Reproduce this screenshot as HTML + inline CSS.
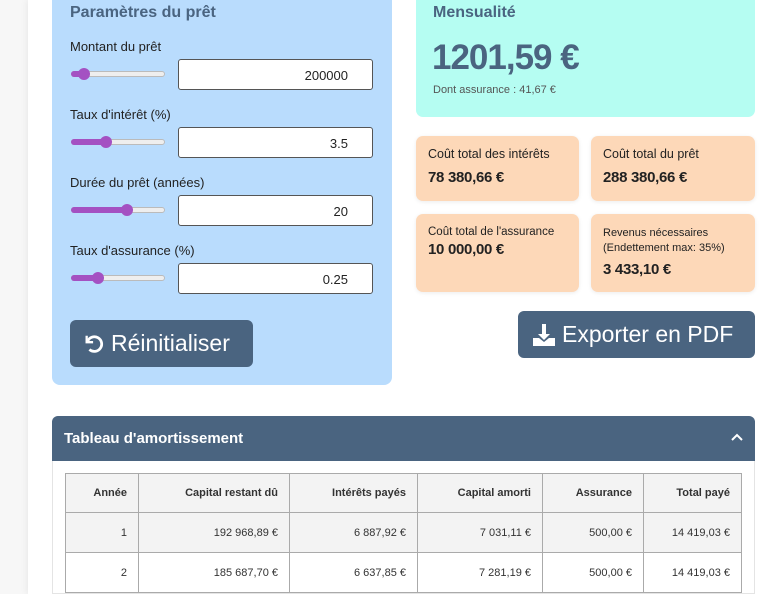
<!DOCTYPE html>
<html><head><meta charset="utf-8"><style>
*{box-sizing:border-box;margin:0;padding:0}
body{width:774px;height:594px;overflow:hidden;background:#f7f7f7;font-family:"Liberation Sans",sans-serif;position:relative}
.main{position:absolute;left:28px;top:0;width:746px;height:594px;background:#fff;box-shadow:-2px 0 6px rgba(0,0,0,.05)}
.a{position:absolute}
.blue{left:52px;top:-10px;width:340px;height:395px;background:#b9dcfd;border-radius:8px}
.lbl{position:absolute;left:70px;font-size:13px;color:#222}
.inp{position:absolute;left:178px;width:195px;height:31px;background:#fff;border:1px solid #555;border-radius:3px;font-size:13px;text-align:right;padding:8px 24px 0 0;color:#222}
.sl{position:absolute;left:71px;width:94px;height:6px;border-radius:3px;background:#eee;border:1px solid #bbb}
.sl i{position:absolute;left:-1px;top:-1px;height:6px;border-radius:3px;background:#a451c2}
.sl b{position:absolute;top:-4px;width:12px;height:12px;border-radius:50%;background:#a451c2;margin-left:-6px}
.btn{background:#4a6480;color:#fff;border-radius:6px;font-size:23px;display:flex;align-items:center}
.card{background:#fdd8b8;border-radius:7px;box-shadow:0 1px 4px rgba(0,0,0,.08);padding:11px 12px;color:#222}
.card .t{font-size:12.5px}.card .v{font-size:15px;font-weight:bold;margin-top:8px;letter-spacing:-.3px}
table{position:absolute;left:65px;top:473px;width:677px;border-collapse:collapse;font-size:11px;color:#333}
td,th{border:1px solid #aaa;text-align:right;padding:0 11px;height:40px}
th{height:39px;font-weight:bold;background:#f3f3f3}
tr:nth-child(2) td{background:#f3f3f3}
</style></head><body>
<div class="main"></div>
<div class="a blue"></div>
<div class="a" style="left:70px;top:4px;font-size:16px;font-weight:bold;color:#4a6480">Paramètres du prêt</div>
<div class="lbl" style="top:39px">Montant du prêt</div>
<div class="sl" style="top:71px"><i style="width:13px"></i><b style="left:12px"></b></div>
<div class="inp" style="top:59px">200000</div>
<div class="lbl" style="top:107px">Taux d'intérêt (%)</div>
<div class="sl" style="top:139px"><i style="width:35px"></i><b style="left:34px"></b></div>
<div class="inp" style="top:127px">3.5</div>
<div class="lbl" style="top:175px">Durée du prêt (années)</div>
<div class="sl" style="top:207px"><i style="width:56px"></i><b style="left:55px"></b></div>
<div class="inp" style="top:195px">20</div>
<div class="lbl" style="top:243px">Taux d'assurance (%)</div>
<div class="sl" style="top:275px"><i style="width:27px"></i><b style="left:26px"></b></div>
<div class="inp" style="top:263px">0.25</div>
<div class="a btn" style="left:70px;top:320px;width:183px;height:47px;padding-left:13px">
<svg width="22" height="22" viewBox="0 0 24 24" fill="none" stroke="#fff" stroke-width="3"><path d="M5 9a8 8 0 1 1 2 9"/><path d="M4 3v7h7" stroke-width="2.5"/></svg><span style="margin-left:6px">Réinitialiser</span></div>

<div class="a" style="left:416px;top:-10px;width:339px;height:127px;background:#b5fdf2;border-radius:7px"></div>
<div class="a" style="left:433px;top:4px;font-size:16px;font-weight:bold;color:#4a6480">Mensualité</div>
<div class="a" style="left:432px;top:38px;font-size:35px;font-weight:bold;color:#4a6480;letter-spacing:-1px">1201,59 €</div>
<div class="a" style="left:433px;top:84px;font-size:11px;color:#555">Dont assurance : 41,67 €</div>

<div class="a card" style="left:416px;top:136px;width:163px;height:65px"><div class="t">Coût total des intérêts</div><div class="v">78 380,66 €</div></div>
<div class="a card" style="left:591px;top:136px;width:164px;height:65px"><div class="t">Coût total du prêt</div><div class="v">288 380,66 €</div></div>
<div class="a card" style="left:416px;top:214px;width:163px;height:78px;padding-top:12px"><div class="t" style="font-size:11.5px">Coût total de l'assurance</div><div class="v" style="margin-top:3px">10 000,00 €</div></div>
<div class="a card" style="left:591px;top:214px;width:164px;height:78px;padding-top:12px"><div class="t" style="font-size:11px;line-height:15px">Revenus nécessaires<br>(Endettement max: 35%)</div><div class="v" style="margin-top:5px">3 433,10 €</div></div>

<div class="a btn" style="left:518px;top:311px;width:237px;height:47px;padding-left:14px">
<svg width="24" height="24" viewBox="0 0 24 24" fill="#fff"><path d="M10 1h4v10h4l-6 6-6-6h4z"/><path d="M1 15h6l5 4 5-4h6v8H1z"/></svg><span style="margin-left:6px">Exporter en PDF</span></div>

<div class="a" style="left:52px;top:416px;width:703px;height:178px;background:#fff;border:1px solid #e4e4e4;border-radius:6px 6px 0 0"></div>
<div class="a" style="left:52px;top:416px;width:703px;height:45px;background:#4a6480;border-radius:6px 6px 0 0;color:#fff;font-weight:bold;font-size:15px;padding:14px 0 0 12px">Tableau d'amortissement<svg style="position:absolute;right:12px;top:17px" width="12" height="8" viewBox="0 0 12 8" fill="none" stroke="#fff" stroke-width="2"><path d="M1 7l5-5 5 5"/></svg></div>
<table>
<tr><th style="width:73px">Année</th><th style="width:151px">Capital restant dû</th><th style="width:128px">Intérêts payés</th><th style="width:125px">Capital amorti</th><th style="width:101px">Assurance</th><th>Total payé</th></tr>
<tr><td>1</td><td>192 968,89 €</td><td>6 887,92 €</td><td>7 031,11 €</td><td>500,00 €</td><td>14 419,03 €</td></tr>
<tr><td>2</td><td>185 687,70 €</td><td>6 637,85 €</td><td>7 281,19 €</td><td>500,00 €</td><td>14 419,03 €</td></tr>
</table>
</body></html>
